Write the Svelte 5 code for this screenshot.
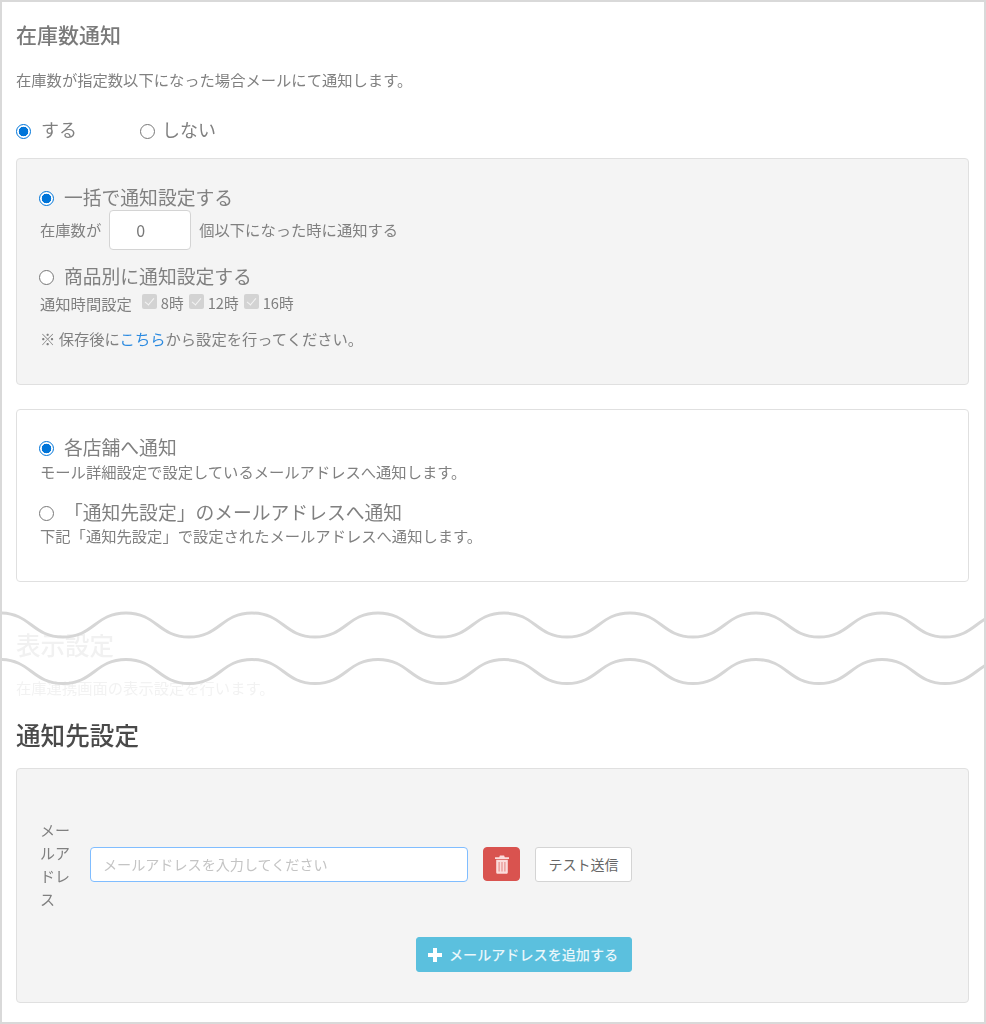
<script>
  const wave = "M-126 0" + Array.from({ length: 10 }, () => "c31 0 32 24 63 24s32-24 63-24").join("");
</script>

<main class="frame">
  <section class="stock">
    <h2 class="title">在庫数通知</h2>
    <p class="desc">在庫数が指定数以下になった場合メールにて通知します。</p>

    <div class="switch">
      <label class="opt on"><span class="radio checked"></span><span class="gap">する</span></label>
      <label class="opt off"><span class="radio"></span><span class="gap-s">しない</span></label>
    </div>

    <div class="panel gray first">
      <label class="big"><span class="radio checked"></span>一括で通知設定する</label>
      <div class="count">
        <span class="lift">在庫数が</span>
        <input class="num" value="0" />
        <span class="lift">個以下になった時に通知する</span>
      </div>

      <label class="big second"><span class="radio"></span>商品別に通知設定する</label>
      <div class="times">
        <span class="tlabel">通知時間設定</span>
        <span class="check"></span><span class="hour">8時</span>
        <span class="check"></span><span class="hour">12時</span>
        <span class="check"></span><span class="hour">16時</span>
      </div>
      <p class="note">※ 保存後に<a href="#top">こちら</a>から設定を行ってください。</p>
    </div>

    <div class="panel white">
      <label class="big"><span class="radio checked"></span>各店舗へ通知</label>
      <p class="sub">モール詳細設定で設定しているメールアドレスへ通知します。</p>
      <label class="big third"><span class="radio"></span>「通知先設定」のメールアドレスへ通知</label>
      <p class="sub">下記「通知先設定」で設定されたメールアドレスへ通知します。</p>
    </div>
  </section>

  <section class="cut">
    <div class="faded">
      <h2 class="title large">表示設定</h2>
      <p class="desc">在庫連携画面の表示設定を行います。</p>
    </div>
    <svg class="waves" width="986" height="90" viewBox="0 0 986 90" fill="none">
      <path d={wave} transform="translate(0 8)" />
      <path d={wave} transform="translate(0 54.5)" />
    </svg>
  </section>

  <section class="dest">
    <h2 class="title strong">通知先設定</h2>
    <div class="panel gray last">
      <div class="row">
        <span class="mail-label">メールアドレス</span>
        <input class="mail" placeholder="メールアドレスを入力してください" />
        <button class="del" aria-label="削除">
          <svg width="16" height="19" viewBox="0 0 16 19">
            <path d="M5.2 2.2 5.9.6h4.2l.7 1.6H15v1.7H1V2.200zM2.200 4.800h11.600v12.400c0 .9-.7 1.600-1.500 1.600H3.700c-.8 0-1.500-.7-1.500-1.600z" fill="#fbdcdb" />
            <path d="M5.100 7v9.500M8 7v9.500M10.900 7v9.500" stroke="#e58a87" stroke-width="1.100" />
          </svg>
        </button>
        <button class="test">テスト送信</button>
      </div>
      <div class="add-row">
        <button class="add">
          <svg width="14" height="14" viewBox="0 0 14 14"><path d="M5 0h4v5h5v4H9v5H5V9H0V5h5z" fill="#fff" /></svg>
          メールアドレスを追加する
        </button>
      </div>
    </div>
  </section>
</main>

<style>
  :global(body) {
    margin: 0;
    background: #fff;
  }
  * {
    box-sizing: border-box;
  }
  .frame {
    width: 986px;
    height: 1024px;
    border: 2px solid #d9d9d9;
    padding: 0 15px 0 14px;
    overflow: hidden;
    color: #808080;
    font-family: "Noto Sans CJK JP", "Noto Sans", sans-serif;
    font-size: 15.300px;
    line-height: 1.2;
    filter: blur(0.5px);
  }
  .title {
    margin: 0;
    font-size: 21px;
    font-weight: 500;
    line-height: 30px;
    color: #7a7a7a;
  }
  .title.large {
    font-size: 24.500px;
  }
  .title.strong {
    font-size: 24.600px;
    line-height: 34px;
    color: #4a4a4a;
  }
  .desc {
    margin: 0;
    line-height: 22px;
  }
  .stock {
    padding-top: 17px;
  }
  .stock .desc {
    margin-top: 19px;
  }
  .switch {
    display: flex;
    align-items: center;
    margin-top: 27px;
    height: 26px;
    font-size: 18px;
  }
  .opt {
    display: flex;
    align-items: center;
  }
  .on {
    width: 124px;
  }
  .gap {
    margin-left: 10px;
  }
  .gap-s {
    margin-left: 7px;
  }
  .radio {
    flex: none;
    width: 15px;
    height: 15px;
    margin-top: 2px;
    border: 1.500px solid #777;
    border-radius: 50%;
    background: #fff;
  }
  .radio.checked {
    border: 1.500px solid #0075d9;
    background: radial-gradient(circle, #0075d9 0 4.500px, #fff 5.100px);
  }
  .panel {
    border: 1px solid #e0e0e0;
    border-radius: 4px;
    padding: 0 23px;
  }
  .gray {
    background: #f4f4f4;
  }
  .first {
    height: 227px;
    margin-top: 15px;
    padding-top: 25px;
  }
  .white {
    height: 173px;
    margin-top: 24px;
    padding-top: 24px;
  }
  .big {
    display: flex;
    align-items: center;
    gap: 10px;
    height: 26px;
    margin-left: -1px;
    font-size: 18.800px;
  }
  .count {
    display: flex;
    align-items: center;
    gap: 8px;
    height: 40px;
  }
  .lift {
    padding-bottom: 2px;
  }
  .num {
    width: 82px;
    height: 40px;
    border: 1px solid #d4d4d4;
    border-radius: 4px;
    background: #fff;
    padding: 0 0 0 26px;
    font: inherit;
    font-size: 16px;
    color: #777;
  }
  .second {
    margin-top: 13px;
  }
  .times {
    display: flex;
    align-items: center;
    height: 26px;
    margin-top: 1px;
    font-size: 14.700px;
  }
  .tlabel {
    margin-right: 10px;
    font-size: 15.300px;
  }
  .check {
    position: relative;
    width: 15px;
    height: 15px;
    margin-top: -4px;
    border-radius: 2px;
    background: #d3d3d3;
  }
  .check::after {
    content: "";
    position: absolute;
    left: 5px;
    top: 2px;
    width: 4px;
    height: 8px;
    border: solid #f4f4f4;
    border-width: 0 1.500px 1.500px 0;
    transform: rotate(40deg);
  }
  .hour {
    margin: 0 5px 0 4px;
  }
  .note {
    margin: 11px 0 0;
    line-height: 22px;
  }
  .note a {
    color: #2b8ae0;
    text-decoration: none;
  }
  .sub {
    margin: 0;
    line-height: 22px;
  }
  .third {
    margin-top: 17px;
  }
  .third + .sub {
    margin-top: -1px;
  }
  .cut {
    position: relative;
    height: 135px;
  }
  .faded {
    padding-top: 48px;
    opacity: 0.1;
  }
  .faded .desc {
    margin-top: 16px;
  }
  .waves {
    position: absolute;
    left: -16px;
    top: 22.500px;
  }
  .waves path {
    stroke: #d6d6d6;
    stroke-width: 3;
  }
  .dest {
    display: flex;
    flex-direction: column;
  }
  .last {
    height: 235px;
    margin-top: 17px;
    padding-top: 49px;
  }
  .row {
    display: flex;
    align-items: center;
  }
  .mail-label {
    flex: none;
    width: 30px;
    margin-right: 20px;
    font-size: 15px;
    line-height: 23px;
  }
  .mail {
    width: 378px;
    height: 35px;
    border: 1px solid #80bdff;
    border-radius: 4px;
    background: #fff;
    padding: 0 12px;
    font: inherit;
    font-size: 14.100px;
  }
  .mail::placeholder {
    color: #c4c4c4;
    opacity: 1;
  }
  button {
    font: inherit;
    cursor: pointer;
  }
  .del {
    display: flex;
    align-items: center;
    justify-content: center;
    width: 37px;
    height: 34px;
    margin-left: 15px;
    padding: 0;
    border: 1px solid #d9534f;
    border-radius: 4px;
    background: #d9534f;
  }
  .test {
    width: 97px;
    height: 35px;
    margin-left: 15px;
    padding: 0;
    border: 1px solid #d4d4d4;
    border-radius: 3px;
    background: #fff;
    color: #666;
    font-size: 14px;
  }
  .add-row {
    display: flex;
    margin-top: 27px;
    padding-left: 376px;
  }
  .add {
    display: flex;
    align-items: center;
    gap: 7px;
    width: 216px;
    height: 35px;
    padding: 0 0 0 11px;
    border: 1px solid #5bc0de;
    border-radius: 3px;
    background: #5bc0de;
    color: #e9f7fb;
    font-size: 14.100px;
    font-weight: 500;
  }
</style>
